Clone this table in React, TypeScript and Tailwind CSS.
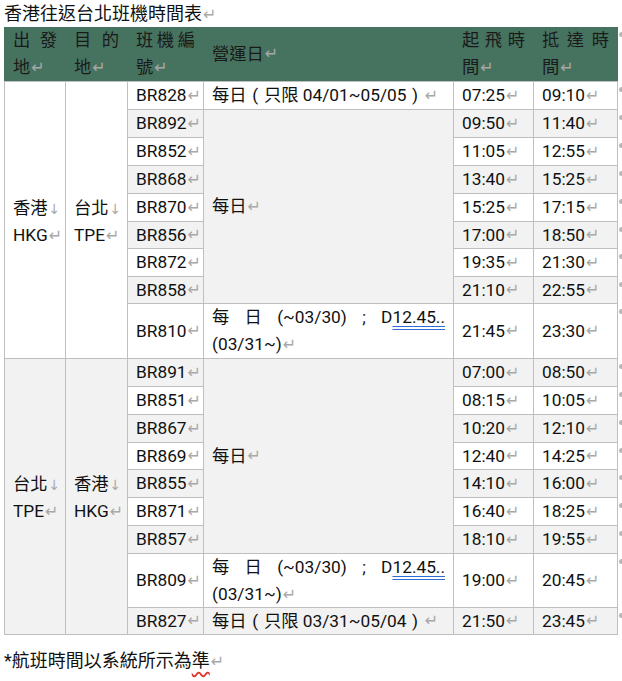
import React from 'react';

type Flight = { code: string; dep: string; arr: string; shade: boolean };

const Ret = () => (
  <span className="ml-[1px] font-['DejaVu_Sans'] text-[16px] leading-none text-[#a8a8a8]">↵</span>
);

const Down = () => (
  <span className="ml-[1px] font-['DejaVu_Sans'] text-[14px] leading-none text-[#a8a8a8]">↓</span>
);

// end-of-row mark, sits just outside the right border (clipped by the page edge)
const RowEnd = () => (
  <span className="absolute left-full top-[5px] ml-[2px] h-[5px] w-[6px] rounded-full bg-[#b8b8b8]" />
);

// full-width bracket look: the half-width bracket centred in one CJK cell
const Br = ({ c }: { c: string }) => <span className="inline-block w-[17.3px] text-center">{c}</span>;

const bg = (shade: boolean) => (shade ? 'bg-[#f2f2f2]' : 'bg-white');

const HeadCell = ({ top, bottom }: { top: string[]; bottom: string }) => (
  <div className="px-2">
    <div className="flex justify-between">
      {top.map((c) => (
        <span key={c}>{c}</span>
      ))}
    </div>
    <div>
      {bottom}
      <Ret />
    </div>
  </div>
);

const Place = ({ city, code, shade }: { city: string; code: string; shade: boolean }) => (
  <div className={`${bg(shade)} row-span-9 flex flex-col justify-center whitespace-nowrap px-2 pt-[3px]`}>
    <div>
      {city}
      <Down />
    </div>
    <div>
      {code}
      <Ret />
    </div>
  </div>
);

const Code = ({ f }: { f: Flight }) => (
  <div className={`${bg(f.shade)} flex items-center px-2`}>
    {f.code}
    <Ret />
  </div>
);

const Times = ({ f }: { f: Flight }) => (
  <>
    <div className={`${bg(f.shade)} flex items-center px-2`}>
      {f.dep}
      <Ret />
    </div>
    <div className={`${bg(f.shade)} relative flex items-center px-2`}>
      {f.arr}
      <Ret />
      <RowEnd />
    </div>
  </>
);

const Limited = ({ range, shade }: { range: string; shade: boolean }) => (
  <div className={`${bg(shade)} flex items-center whitespace-nowrap px-2`}>
    每日
    <Br c="(" />
    只限 {range}
    <Br c=")" />
    <Ret />
  </div>
);

const Daily = () => (
  <div className="row-span-7 flex items-center bg-[#f2f2f2] px-2">
    每日
    <Ret />
  </div>
);

const Split = () => (
  <div className="bg-white px-2">
    <div className="flex justify-between">
      <span>每</span>
      <span>日</span>
      <span>(~03/30)</span>
      <span>;</span>
      <span>
        D
        <span className="underline decoration-[#2f6ad9] decoration-double underline-offset-[3px]">12.45..</span>
      </span>
    </div>
    <div>
      (03/31~)
      <Ret />
    </div>
  </div>
);

const outbound: Flight[] = [
  { code: 'BR828', dep: '07:25', arr: '09:10', shade: false },
  { code: 'BR892', dep: '09:50', arr: '11:40', shade: true },
  { code: 'BR852', dep: '11:05', arr: '12:55', shade: false },
  { code: 'BR868', dep: '13:40', arr: '15:25', shade: true },
  { code: 'BR870', dep: '15:25', arr: '17:15', shade: false },
  { code: 'BR856', dep: '17:00', arr: '18:50', shade: true },
  { code: 'BR872', dep: '19:35', arr: '21:30', shade: false },
  { code: 'BR858', dep: '21:10', arr: '22:55', shade: true },
  { code: 'BR810', dep: '21:45', arr: '23:30', shade: false },
];

const inbound: Flight[] = [
  { code: 'BR891', dep: '07:00', arr: '08:50', shade: true },
  { code: 'BR851', dep: '08:15', arr: '10:05', shade: false },
  { code: 'BR867', dep: '10:20', arr: '12:10', shade: true },
  { code: 'BR869', dep: '12:40', arr: '14:25', shade: false },
  { code: 'BR855', dep: '14:10', arr: '16:00', shade: true },
  { code: 'BR871', dep: '16:40', arr: '18:25', shade: false },
  { code: 'BR857', dep: '18:10', arr: '19:55', shade: true },
  { code: 'BR809', dep: '19:00', arr: '20:45', shade: false },
  { code: 'BR827', dep: '21:50', arr: '23:45', shade: true },
];

export default function App() {
  // cells are listed in row order; the grid's auto placement skips the spanned ones
  const cells: React.ReactNode[] = [];

  cells.push(<Place key="o-from" city="香港" code="HKG" shade={false} />);
  cells.push(<Place key="o-to" city="台北" code="TPE" shade={false} />);
  outbound.forEach((f, i) => {
    cells.push(<Code key={f.code} f={f} />);
    if (i === 0) cells.push(<Limited key="o-lim" range="04/01~05/05" shade={false} />);
    if (i === 1) cells.push(<Daily key="o-daily" />);
    if (i === 8) cells.push(<Split key="o-split" />);
    cells.push(<Times key={f.code + 't'} f={f} />);
  });

  cells.push(<Place key="i-from" city="台北" code="TPE" shade={true} />);
  cells.push(<Place key="i-to" city="香港" code="HKG" shade={true} />);
  inbound.forEach((f, i) => {
    cells.push(<Code key={f.code} f={f} />);
    if (i === 0) cells.push(<Daily key="i-daily" />);
    if (i === 7) cells.push(<Split key="i-split" />);
    if (i === 8) cells.push(<Limited key="i-lim" range="03/31~05/04" shade={true} />);
    cells.push(<Times key={f.code + 't'} f={f} />);
  });

  return (
    <div className="h-[681px] w-[622px] overflow-hidden bg-white font-['Roboto','Noto_Sans_CJK_TC',sans-serif] text-[#111]">
      <p className="h-[27px] pl-[4px] text-[18px] leading-[27px]">
        香港往返台北班機時間表
        <Ret />
      </p>

      {/* header */}
      <div className="relative ml-[4px] grid h-[54px] w-[614px] grid-cols-[60px_61px_75px_249px_79px_83px] gap-px bg-[#46735f] px-px text-[17.3px] leading-[27px] text-[#1a1a1a]">
        <HeadCell top={['出', '發']} bottom="地" />
        <HeadCell top={['目', '的']} bottom="地" />
        <HeadCell top={['班', '機', '編']} bottom="號" />
        <div className="flex items-center px-2">
          營運日
          <Ret />
        </div>
        <HeadCell top={['起', '飛', '時']} bottom="間" />
        <div className="relative">
          <HeadCell top={['抵', '達', '時']} bottom="間" />
          <RowEnd />
        </div>
      </div>

      {/* body */}
      <div className="ml-[4px] grid w-[614px] grid-cols-[60px_61px_75px_249px_79px_83px] grid-rows-[27px_27px_27px_27px_27px_26px_27px_26px_54px_27px_27px_27px_26px_27px_27px_27px_53px_26px] gap-px bg-[#bfbfbf] p-px text-[17.3px] leading-[27px]">
        {cells}
      </div>

      <p className="mt-[12px] pl-[4px] text-[18px] leading-[27px]">
        *航班時間以系統所示為
        <span className="underline decoration-[#e0302a] decoration-wavy underline-offset-[4px]">準</span>
        <Ret />
      </p>
    </div>
  );
}
